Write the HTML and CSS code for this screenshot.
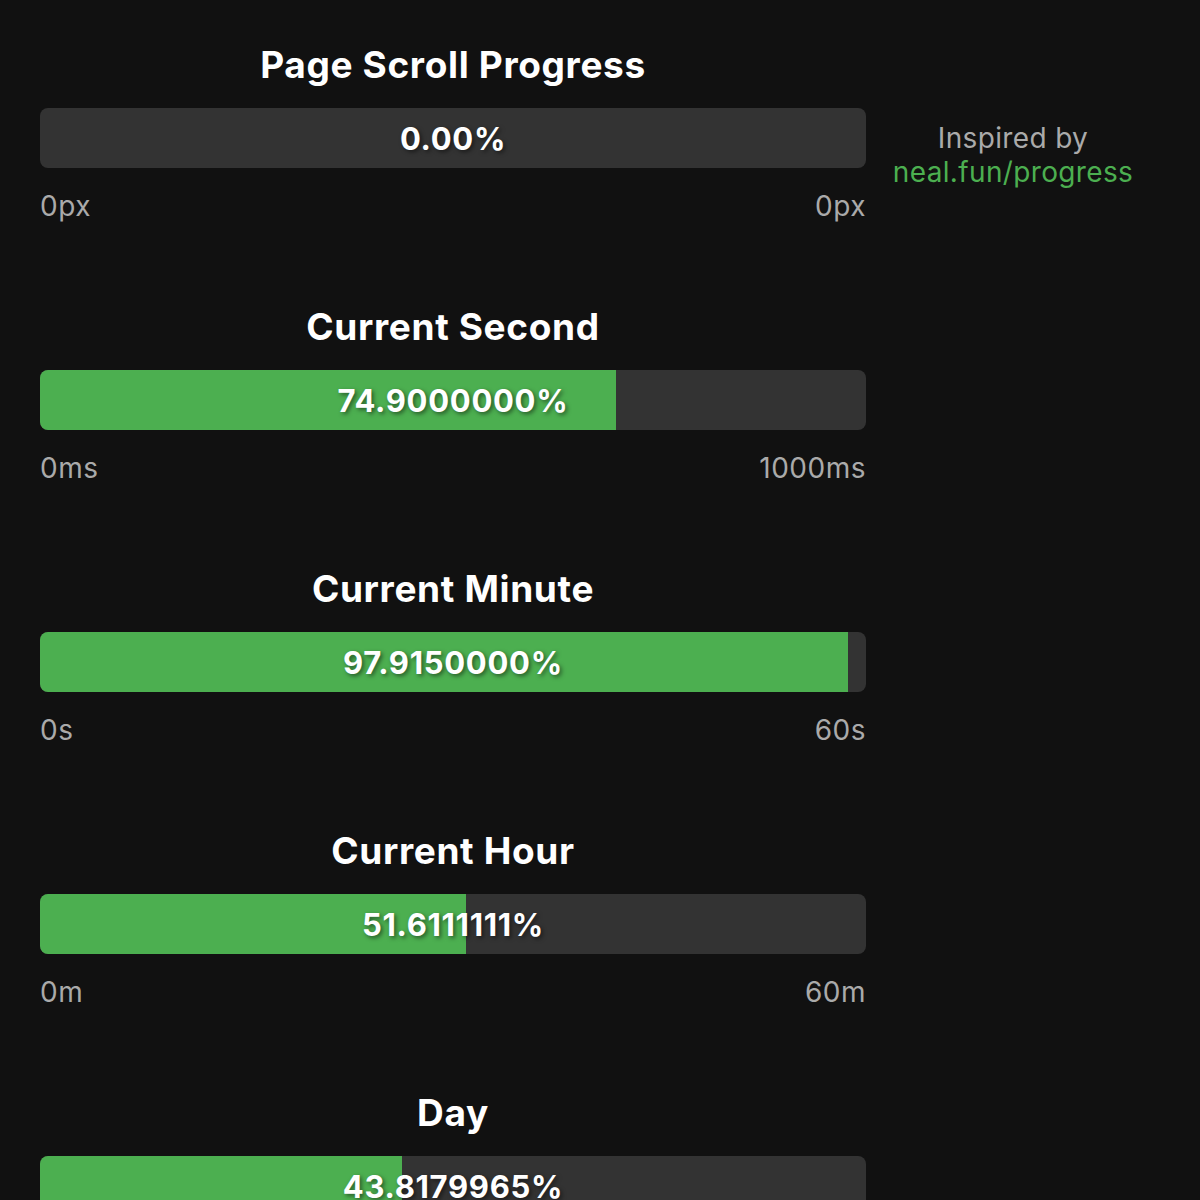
FILE: index.html
```html
<!DOCTYPE html>
<html lang="en">
<head>
<meta charset="utf-8">
<title>Progress</title>
<link rel="stylesheet" href="styles.css">
</head>
<body>
<div class="layout">
  <main class="main">
    <section class="meter">
      <h2 class="meter-title">Page Scroll Progress</h2>
      <div class="bar">
        <div class="fill" style="width:0%"></div>
        <span class="pct">0.00%</span>
      </div>
      <div class="labels"><span>0px</span><span>0px</span></div>
    </section>
    <section class="meter">
      <h2 class="meter-title">Current Second</h2>
      <div class="bar">
        <div class="fill" style="width:69.75%"></div>
        <span class="pct">74.9000000%</span>
      </div>
      <div class="labels"><span>0ms</span><span>1000ms</span></div>
    </section>
    <section class="meter">
      <h2 class="meter-title">Current Minute</h2>
      <div class="bar">
        <div class="fill" style="width:97.82%"></div>
        <span class="pct">97.9150000%</span>
      </div>
      <div class="labels"><span>0s</span><span>60s</span></div>
    </section>
    <section class="meter">
      <h2 class="meter-title">Current Hour</h2>
      <div class="bar">
        <div class="fill" style="width:51.57%"></div>
        <span class="pct">51.6111111%</span>
      </div>
      <div class="labels"><span>0m</span><span>60m</span></div>
    </section>
    <section class="meter">
      <h2 class="meter-title">Day</h2>
      <div class="bar">
        <div class="fill" style="width:43.83%"></div>
        <span class="pct">43.8179965%</span>
      </div>
      <div class="labels"><span>0h</span><span>24h</span></div>
    </section>
  </main>
  <aside class="aside">
    <div class="aside-line">Inspired by</div>
    <a class="aside-link" href="#">neal.fun/progress</a>
  </aside>
</div>
</body>
</html>
```

FILE: styles.css
```css
html, body {
  margin: 0;
  padding: 0;
  background: #111111;
  color: #ffffff;
  font-family: Inter, "Noto Sans", "Liberation Sans", sans-serif;
}

.layout {
  display: grid;
  grid-template-columns: 826px 1fr;
  padding: 43px 40px 0 40px;
}

.main {
  display: flex;
  flex-direction: column;
  gap: 83px;
}

.meter {
  display: flex;
  flex-direction: column;
}

.meter-title {
  margin: 0;
  font-size: 37px;
  line-height: 43px;
  font-weight: 700;
  letter-spacing: 0.65px;
  text-align: center;
}

.bar {
  position: relative;
  margin-top: 22px;
  height: 60px;
  background: #333333;
  border-radius: 8px;
  overflow: hidden;
}

.fill {
  height: 100%;
  background: #4caf50;
}

.pct {
  position: absolute;
  inset: 0;
  display: flex;
  align-items: center;
  justify-content: center;
  font-size: 31px;
  font-weight: 700;
  letter-spacing: 0.7px;
  color: #ffffff;
  text-shadow: 2px 2px 4px rgba(0, 0, 0, 0.5);
}

.labels {
  margin-top: 23px;
  display: flex;
  justify-content: space-between;
  font-size: 28px;
  line-height: 31px;
  letter-spacing: 0.5px;
  color: #aaaaaa;
}

.aside {
  display: flex;
  flex-direction: column;
  align-items: center;
  padding-top: 78px;
  font-size: 28px;
  line-height: 34px;
  letter-spacing: 0.35px;
}

.aside-line {
  color: #aaaaaa;
}

.aside-link {
  color: #4caf50;
  text-decoration: none;
}
```
